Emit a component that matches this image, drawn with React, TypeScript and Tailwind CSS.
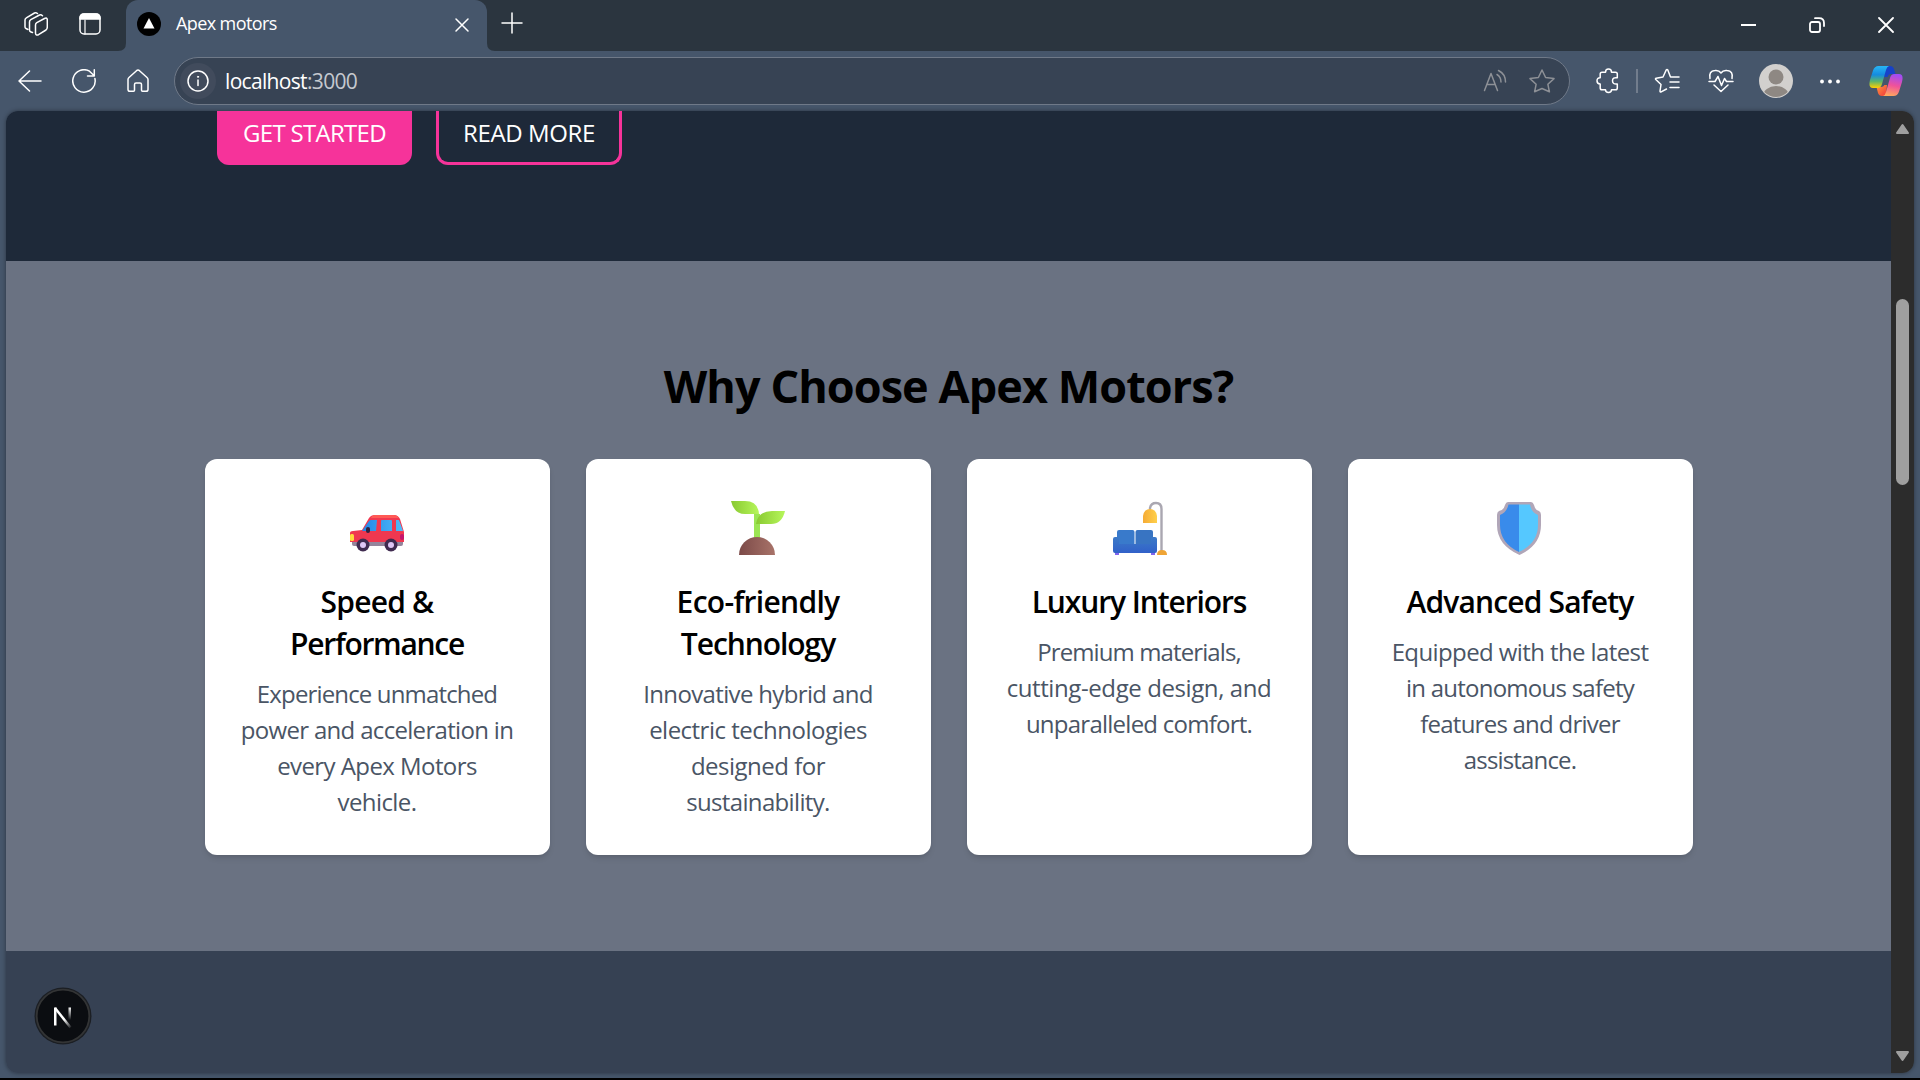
import React from "react";

const W = ({ children, w = 24, h = 24, className = "" }: { children: React.ReactNode; w?: number; h?: number; className?: string }) => (
  <svg width={w} height={h} viewBox={`0 0 ${w} ${h}`} fill="none" stroke="#fff" strokeWidth="1.5" strokeLinecap="round" strokeLinejoin="round" className={`shrink-0 ${className}`}>
    {children}
  </svg>
);

function TitleBar() {
  return (
    <div className="flex h-[51px] items-stretch bg-[#2b353f]">
      <div className="flex w-[126px] items-center rounded-br-lg">
        <W w={24} h={26} className="mb-[3px] ml-6">
          <path d="M4 18.500L2 17.500Q1 17 1 16V9Q1 7.500 2.300 6.800L10.500 2Q12 1.300 13.500 2.500" />
          <path d="M8.500 21.500L7 21Q5.500 20.500 5.500 19V11Q5.500 9.500 6.800 8.700L15.500 4Q17 3.300 18.500 4.700" />
          <path d="M11.500 14Q11.500 12.500 12.800 11.700L20.500 7.500Q23.300 6.200 23.300 9V16Q23.300 18 22 19L14.500 23.700Q11.500 25 11.500 22Z" />
        </W>
        <W w={22} h={24} className="mb-[3px] ml-[31px]">
          <rect x="1" y="2" width="20" height="20" rx="4" />
          <path d="M1 7V6Q1 2 5 2H17Q21 2 21 6V7Z" fill="#fff" />
          <path d="M6 8V22" strokeWidth="1.200" />
        </W>
      </div>
      <div className="relative flex w-[361px] items-center rounded-t-xl bg-[#46566b] pl-[11px]">
        <svg className="absolute bottom-0 -left-2" width="8" height="8"><path d="M8 0V8H0Q8 8 8 0" fill="#46566b" /></svg>
        <svg className="absolute -right-2 bottom-0" width="8" height="8"><path d="M0 0V8H8Q0 8 0 0" fill="#46566b" /></svg>
        <svg width="24" height="24" viewBox="0 0 24 24" className="mb-[3px]"><circle cx="12" cy="12" r="12" fill="#000" /><path d="M12 6L17.500 16.500H6.500Z" fill="#fff" /></svg>
        <span className="mb-[5px] ml-[15px] text-[18px] tracking-[-0.6px] text-white">Apex motors</span>
        <W w={16} h={16} className="mr-[17px] mb-[2px] ml-auto"><path d="M2 2L14 14M14 2L2 14" /></W>
      </div>
      <W w={22} h={24} className="mt-[11px] ml-[14px]"><path d="M11 2V22M1 12H21" /></W>
      <div className="ml-auto flex items-center pb-px">
        <W w={16} h={16}><path d="M1 8H16" strokeWidth="2" strokeLinecap="butt" /></W>
        <W w={16} h={16} className="ml-[53px]">
          <rect x="1" y="5" width="10" height="10" rx="2" strokeWidth="1.800" />
          <path d="M6 1.200H10Q15 1.200 15 6V9" strokeWidth="1.800" />
        </W>
        <W w={16} h={16} className="mr-[26px] ml-[53px]"><path d="M1 1L15 15M15 1L1 15" strokeWidth="1.800" /></W>
      </div>
    </div>
  );
}

function Toolbar() {
  return (
    <div className="flex h-[60px] items-center bg-[#46566b]">
      <W w={24} h={26} className="mb-px ml-[18px]"><path d="M23 13H1M11.500 3L1 13L11.500 23" /></W>
      <W w={24} h={24} className="ml-[30px]"><path d="M22.900 9.500A11.200 11.200 0 1 1 17.500 2.200L22 6.500M22.300 .8V7H15.500" /></W>
      <W w={22} h={24} className="ml-[31px]">
        <path d="M1 10.500Q1 9.500 2 8.500L9.500 1.700Q11 .5 12.500 1.700L20 8.500Q21 9.500 21 10.500V20.500Q21 22.300 19 22.300H15.500Q14.500 22.300 14.500 21.300V15.500Q14.500 14 13 14H9Q7.500 14 7.500 15.500V21.300Q7.500 22.300 6.500 22.300H3Q1 22.300 1 20.500Z" />
      </W>
      <div className="ml-[25px] flex h-12 w-[1396px] items-center rounded-full border border-[#6f7988] bg-[#374354] pl-[5px]">
        <div className="flex size-9 items-center justify-center rounded-full bg-[#414b5c]">
          <W w={22} h={22}><circle cx="11" cy="11" r="10" /><path d="M11 10V15.500" /><circle cx="11" cy="6.800" r=".6" fill="#fff" strokeWidth="1" /></W>
        </div>
        <span className="mt-px ml-[9px] text-[21px] tracking-[-0.67px] text-white">localhost<span className="text-[#c5c9cf]">:3000</span></span>
        <W w={24} h={24} className="ml-auto [&>path]:stroke-[#8d9096]"><path d="M1.500 21.500L8 4.500L14.500 21.500M4 15.500H12M14 5.500Q18 8 18 13M15.500 1.500Q22.500 5 22.500 13" /></W>
        <W w={26} h={24} className="mr-[14px] ml-[22px] [&>path]:stroke-[#8d9096]"><path d="M13 1L16.600 8.500L25 9.600L18.900 15.300L20.400 22.800L13 19.500L5.600 22.800L7.100 15.300L1 9.600L9.400 8.500Z" /></W>
      </div>
      <W w={24} h={26} className="ml-[26px]">
        <path d="M6 4.200H9.500Q9.500 1 12.500 1T15.500 4.200H19.500Q21.300 4.200 21.300 6V9.800Q16.500 9 16.500 12.800T21.300 16V20Q21.300 21.800 19.500 21.800H15.500Q15.500 24.500 12.500 24.500T9.500 21.800H6Q4.200 21.800 4.200 20V16Q1 16 1 12.800T4.200 9.800V6Q4.200 4.200 6 4.200Z" />
      </W>
      <div className="ml-[16px] h-6 w-[2px] bg-[#727d8d]" />
      <W w={26} h={26} className="ml-[16px]">
        <path d="M12.500 21L7.200 23.800Q6 24.300 6 23L7 16.500L1.800 11.500Q1 10.400 2.200 10.200L9 9L12.200 2Q13 1 13.800 2L16.500 9H25M16 14H25M16 19.500H25" />
      </W>
      <W w={26} h={26} className="ml-[28px]">
        <path d="M2 10.500Q.5 3 7 2.500Q11 2 13 5Q15 2 19 2.500Q25.500 3 24 10.500M1 13.500H7L10 8.500L13.500 17.500L16.500 10.500L18.500 13.500H25M6 17L13 23.500L20 17" />
      </W>
      <svg width="34" height="34" viewBox="0 0 34 34" className="ml-[25px]">
        <defs><clipPath id="avatar"><circle cx="17" cy="17" r="16" /></clipPath></defs>
        <circle cx="17" cy="17" r="17" fill="#d2d0ce" /><circle cx="17" cy="13" r="7.500" fill="#8e8883" />
        <ellipse cx="17" cy="32" rx="13" ry="10" fill="#8e8883" clipPath="url(#avatar)" />
      </svg>
      <svg width="22" height="6" className="ml-[26px]" fill="#fff"><circle cx="3" cy="3.500" r="1.900" /><circle cx="11" cy="3.500" r="1.900" /><circle cx="19" cy="3.500" r="1.900" /></svg>
      <svg width="34" height="32" viewBox="0 0 34 32" className="ml-[28px]">
        <defs>
          <linearGradient id="cpA" x1="0" y1="0" x2="0" y2="1"><stop offset="0" stopColor="#28b6f6" /><stop offset=".4" stopColor="#148be0" /><stop offset=".7" stopColor="#5db56b" /><stop offset="1" stopColor="#ffd000" /></linearGradient>
          <linearGradient id="cpB" x1="0.500" y1="0" x2="0.300" y2="1"><stop offset="0" stopColor="#a04cf5" /><stop offset=".5" stopColor="#f0529a" /><stop offset="1" stopColor="#ffab5c" /></linearGradient>
          <linearGradient id="cpC" x1="0" y1="0" x2="1" y2="1"><stop offset="0" stopColor="#ff9a3c" /><stop offset="1" stopColor="#f0353d" /></linearGradient>
        </defs>
        <path d="M17 1H21Q24 1 25 4L26.500 9H22Q19.500 9 18.500 12H15Z" fill="#1742c8" />
        <path d="M17 31H13Q10 31 9 28L7.500 22H12Q14.500 22 15.500 20H18Z" fill="url(#cpC)" />
        <path d="M9.500 1H20Q18 1.500 17 5L13 19Q12 23 8.500 23H4Q-1 23 1 15L4 5.500Q5.500 1 9.500 1Z" fill="url(#cpA)" />
        <path d="M24.500 31H14Q16 30.500 17 27L21 13Q22 9 25.500 9H30Q35 9 33 17L30 26.500Q28.500 31 24.500 31Z" fill="url(#cpB)" />
      </svg>
    </div>
  );
}

const Car = () => (
  <svg width="54" height="54" viewBox="0 0 54 54">
    <defs><linearGradient id="glass"><stop offset="0" stopColor="#2385e6" /><stop offset="1" stopColor="#50bdfa" /></linearGradient></defs>
    <rect x="2" y="39" width="51" height="6" rx="2" fill="#95859c" />
    <path d="M0 32Q0 30 3 30L12 29L19 17Q21 14 25 14H44Q48 14 50 18L54 31V41H0Z" fill="#f03850" />
    <path d="M25 14H44Q47 14 49 17H21Q22 14 25 14Z" fill="#ff5a55" />
    <path d="M12 30L19 20Q20 19 21 19H27L26 30ZM31 20Q31 19 32 19H41Q42 19 42 20V30H31ZM46 19H49L53 30H46Z" fill="url(#glass)" />
    <rect x="16" y="26" width="4" height="6" rx="2" fill="#30223f" /><rect x="0" y="33" width="4" height="7" rx="1.500" fill="#ffdb3d" /><rect x="50" y="33" width="4" height="6" rx="2" fill="#c6156d" />
    <circle cx="13" cy="44" r="6.500" fill="#402b50" /><circle cx="13" cy="44" r="3" fill="#dfc6f5" />
    <circle cx="41" cy="44" r="6.500" fill="#402b50" /><circle cx="41" cy="44" r="3" fill="#dfc6f5" />
  </svg>
);

const Sprout = () => (
  <svg width="54" height="54" viewBox="0 0 54 54">
    <defs>
      <linearGradient id="leaf"><stop offset="0" stopColor="#89c931" /><stop offset="1" stopColor="#b6f65b" /></linearGradient>
      <linearGradient id="soil"><stop offset="0" stopColor="#7c4a48" /><stop offset="1" stopColor="#a87369" /></linearGradient>
    </defs>
    <rect x="23" y="13" width="6" height="26" fill="#9be553" />
    <path d="M0 0H14Q27 0 28 13H14Q3 13 0 0Z" fill="url(#leaf)" />
    <path d="M54 10H41Q27 10 25 23H40Q51 23 54 10Z" fill="url(#leaf)" />
    <path d="M8 54A18 18 0 0 1 44 54Z" fill="url(#soil)" />
  </svg>
);

const Sofa = () => (
  <svg width="54" height="54" viewBox="0 0 54 54" className="ml-[2px]">
    <defs>
      <linearGradient id="couch" x1="0" y1="0" x2="0" y2="1"><stop offset="0" stopColor="#3c7ac8" /><stop offset="1" stopColor="#3161c9" /></linearGradient>
      <linearGradient id="shade"><stop offset="0" stopColor="#f5ab35" /><stop offset="1" stopColor="#ffd04b" /></linearGradient>
    </defs>
    <path d="M37 10V7Q38 2 43 2Q48.500 2 48.500 8V50" fill="none" stroke="#aaa7b1" strokeWidth="2.400" />
    <path d="M30 22V15Q31 8 37 8T44 15V22Z" fill="url(#shade)" />
    <path d="M44 54Q44 49 49 49T54 54Z" fill="#efa435" />
    <rect x="2" y="51" width="4" height="3" fill="#8065ed" /><rect x="38" y="51" width="4" height="3" fill="#8065ed" />
    <rect x="4" y="29" width="17.500" height="16" rx="2" fill="#397acb" /><rect x="22.500" y="29" width="17.500" height="16" rx="2" fill="#3874c2" />
    <path d="M0 38Q0 36 2 36H4Q6 36 6 38V43H38V38Q38 36 40 36H42Q44 36 44 38V50Q44 52 42 52H2Q0 52 0 50Z" fill="url(#couch)" />
  </svg>
);

const Shield = () => (
  <svg width="54" height="54" viewBox="0 0 54 54" className="mr-[3px]">
    <path d="M16 1H39Q41 1 42 4Q43 9 47 10Q49 11 49 14V24Q49 44 27.500 54Q5 44 5 24V14Q5 11 7 10Q12 9 13 4Q14 1 16 1Z" fill="#b1a6b8" />
    <path d="M27 3.500V51Q8 42 8 24V14Q15 11 16.500 3.500Z" fill="#398beb" />
    <path d="M27 3.500V51Q46 42 46 24V14Q39 11 38 3.500Z" fill="#55c8ff" />
  </svg>
);

type Line = [text: string, tracking: number];
const features: { icon: React.ReactNode; title: Line[]; text: Line[] }[] = [
  { icon: <Car />, title: [["Speed &", -0.8], ["Performance", -1.3]], text: [["Experience unmatched", -0.85], ["power and acceleration in", -0.68], ["every Apex Motors", -0.57], ["vehicle.", -0.6]] },
  { icon: <Sprout />, title: [["Eco-friendly", -0.7], ["Technology", -1.05]], text: [["Innovative hybrid and", -0.65], ["electric technologies", -0.52], ["designed for", -0.5], ["sustainability.", -0.65]] },
  { icon: <Sofa />, title: [["Luxury Interiors", -1.1]], text: [["Premium materials,", -0.9], ["cutting-edge design, and", -0.4], ["unparalleled comfort.", -0.75]] },
  { icon: <Shield />, title: [["Advanced Safety", -0.85]], text: [["Equipped with the latest", -0.6], ["in autonomous safety", -0.75], ["features and driver", -0.76], ["assistance.", -0.85]] },
];

const Lines = ({ lines }: { lines: Line[] }) => (
  <>
    {lines.map(([text, tracking]) => (
      <span key={text} className="block" style={{ letterSpacing: tracking }}>{text}</span>
    ))}
  </>
);

function Page() {
  return (
    <div className="flex w-[1885px] flex-col">
      <div className="flex h-[150px] items-start gap-6 bg-[#1e2939] pl-[211px]">
        <div className="h-[54px] w-[195px] rounded-b-xl bg-[#f6339a] pt-[4px] text-center text-[24px] leading-9 tracking-[-0.7px] text-white">GET STARTED</div>
        <div className="h-[54px] w-[186px] rounded-b-xl border-[3px] border-t-0 border-[#f6339a] pt-[4px] text-center text-[24px] leading-9 tracking-[-0.4px] text-white">READ MORE</div>
      </div>
      <div className="flex h-[690px] flex-col items-center bg-[#6a7282] pt-[98px]">
        <h2 className="text-[45px] leading-[54px] font-bold tracking-[-0.92px] whitespace-nowrap text-black">Why Choose Apex Motors?</h2>
        <div className="mt-[46px] grid grid-cols-4 gap-9">
          {features.map((f) => (
            <div key={f.title[0][0]} className="flex h-[396px] w-[345px] flex-col items-center rounded-xl bg-white px-9 pt-9 text-center shadow-md">
              <div className="flex h-[60px] items-end">{f.icon}</div>
              <h3 className="mt-[26px] text-[30px] leading-[42px] font-semibold whitespace-nowrap text-black"><Lines lines={f.title} /></h3>
              <p className="mt-[11px] text-[24px] leading-9 whitespace-nowrap text-[#4a5565]"><Lines lines={f.text} /></p>
            </div>
          ))}
        </div>
      </div>
      <div className="flex-1 bg-[#364153] pt-9 pl-[28px]">
        <svg width="58" height="58" viewBox="0 0 58 58">
          <defs>
            <linearGradient id="nd" x1="20" y1="21" x2="37" y2="40" gradientUnits="userSpaceOnUse"><stop offset=".6" stopColor="#fff" /><stop offset="1" stopColor="#fff" stopOpacity=".1" /></linearGradient>
            <linearGradient id="nv" x1="0" y1="20" x2="0" y2="33" gradientUnits="userSpaceOnUse"><stop offset="0" stopColor="#fff" /><stop offset="1" stopColor="#fff" stopOpacity="0" /></linearGradient>
          </defs>
          <circle cx="29" cy="29" r="28.500" fill="#1b1e23" /><circle cx="29" cy="29" r="26.300" fill="#0b0d11" stroke="#333435" strokeWidth="1.800" />
          <rect x="20" y="20.500" width="2.500" height="18" fill="#fff" /><path d="M21 21L36.500 40.500" stroke="url(#nd)" strokeWidth="2.500" /><rect x="34.500" y="20.500" width="2.500" height="13" fill="url(#nv)" />
        </svg>
      </div>
    </div>
  );
}

export default function App() {
  return (
    <div className="flex h-[1080px] w-[1920px] flex-col overflow-hidden bg-[#46566b] font-['Open_Sans',sans-serif]">
      <TitleBar />
      <Toolbar />
      <div className="ml-[6px] flex h-[962px] w-[1908px] overflow-hidden rounded-xl shadow-[0_0_4px_#0006]">
        <Page />
        <div className="flex w-[23px] flex-col items-center bg-[#2c2c2c]">
          <svg width="15" height="12" className="mt-3"><path d="M7.500 2L13 10H2Z" fill="#9f9f9f" stroke="#9f9f9f" strokeWidth="2" strokeLinejoin="round" /></svg>
          <div className="mt-[164px] h-[186px] w-[13px] rounded-full bg-[#9f9f9f]" />
          <svg width="15" height="12" className="mt-auto mb-[11px]"><path d="M7.500 10L13 2H2Z" fill="#9f9f9f" stroke="#9f9f9f" strokeWidth="2" strokeLinejoin="round" /></svg>
        </div>
      </div>
      <div className="mt-[5px] h-[2px] bg-black" />
    </div>
  );
}
